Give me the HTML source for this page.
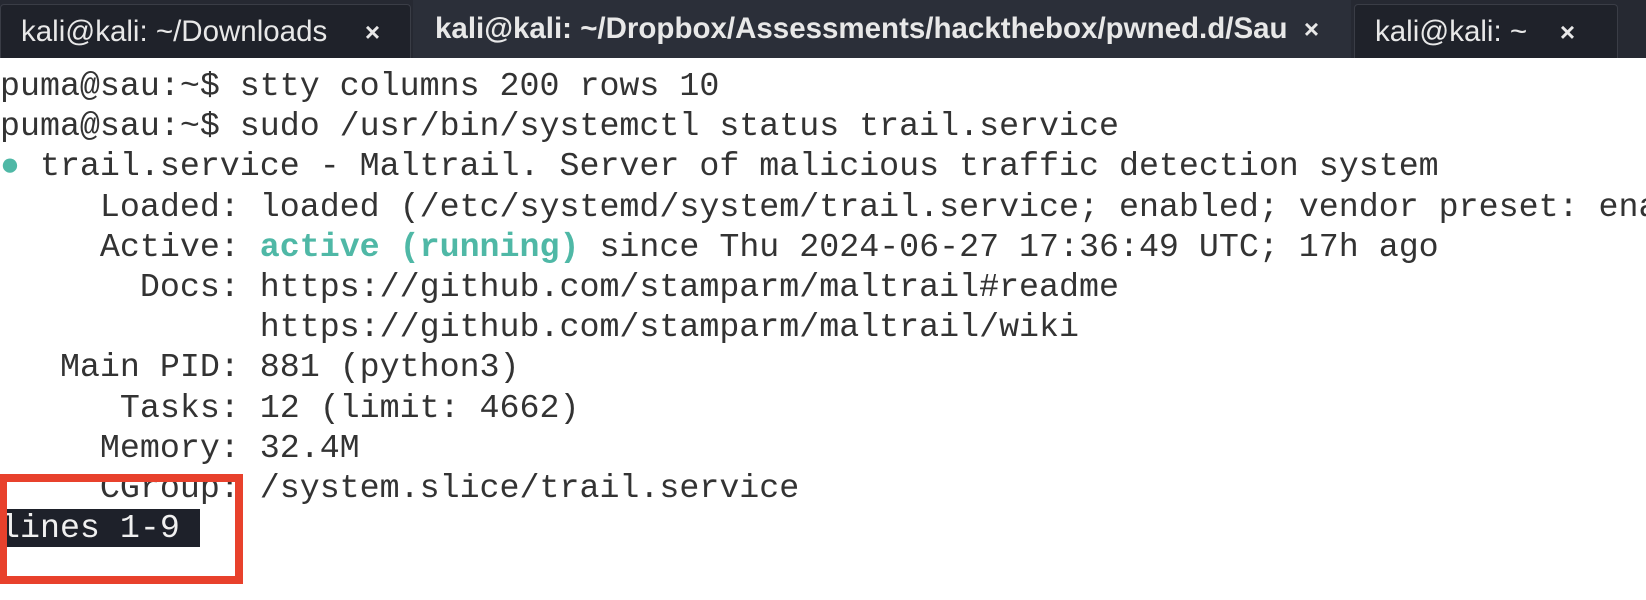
<!DOCTYPE html>
<html><head><meta charset="utf-8"><style>
html,body{margin:0;padding:0;width:1646px;height:600px;overflow:hidden;background:#fff;position:relative;}
.bar{position:absolute;left:0;top:0;width:1646px;height:58px;background:#262932;}
.tab{position:absolute;top:4px;height:54px;box-sizing:border-box;color:#e8e8e8;font-family:"Liberation Sans Narrow","Liberation Sans",sans-serif;font-size:29.5px;line-height:54px;padding-left:20px;white-space:nowrap;overflow:hidden;}
.t1{left:0;width:411px;background:#1f222a;border:1px solid #3a3d46;border-bottom:none;border-radius:4px 4px 0 0;}
.t2{left:413px;width:938px;background:#2b2f39;font-weight:bold;top:0;height:58px;line-height:58px;padding-left:22px;}
.t3{left:1354px;width:264px;background:#1f222a;border:1px solid #3a3d46;border-bottom:none;border-radius:4px 4px 0 0;}
.x{position:absolute;right:30px;top:0;font-weight:bold;font-size:26px;}
.t2 .x{right:32px;}
.t3 .x{right:42px;}
pre{position:absolute;left:0;top:66px;width:1646px;overflow:hidden;margin:0;font-family:"Liberation Mono","DejaVu Sans Mono",monospace;font-size:33.3px;line-height:40.2px;color:#333;}
.g{color:#4fb8a6;font-weight:bold;}
.hl{background:#1e212a;color:#f0f0f0;}
.red{position:absolute;left:-1px;top:474px;width:244px;height:110px;box-sizing:border-box;border:8px solid #e8412c;}
</style></head><body>
<div class="bar">
<div class="tab t1">kali@kali: ~/Downloads<span class="x">×</span></div>
<div class="tab t2">kali@kali: ~/Dropbox/Assessments/hackthebox/pwned.d/Sau<span class="x">×</span></div>
<div class="tab t3">kali@kali: ~<span class="x">×</span></div>
</div>
<pre>puma@sau:~$ stty columns 200 rows 10
puma@sau:~$ sudo /usr/bin/systemctl status trail.service
<span class="g">●</span> trail.service - Maltrail. Server of malicious traffic detection system
     Loaded: loaded (/etc/systemd/system/trail.service; enabled; vendor preset: ena
     Active: <span class="g">active (running)</span> since Thu 2024-06-27 17:36:49 UTC; 17h ago
       Docs: https://github.com/stamparm/maltrail#readme
             https://github.com/stamparm/maltrail/wiki
   Main PID: 881 (python3)
      Tasks: 12 (limit: 4662)
     Memory: 32.4M
     CGroup: /system.slice/trail.service
<span class="hl">lines 1-9 </span></pre>
<div class="red"></div>
</body></html>
